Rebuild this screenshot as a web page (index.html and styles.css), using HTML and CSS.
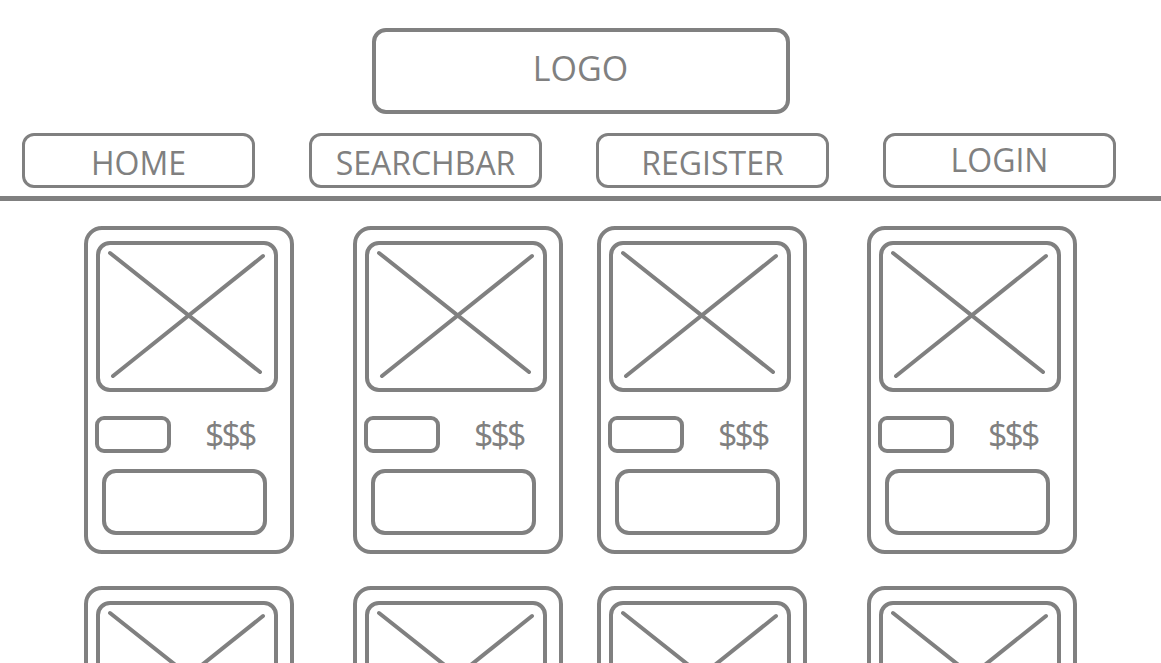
FILE: index.html
```html
<!DOCTYPE html>
<html lang="en">
<head>
<meta charset="utf-8"/>
<meta content="width=device-width, initial-scale=1.0" name="viewport"/>
<title>Shop Wireframe</title>
<link rel="stylesheet" href="styles.css">
</head>
<body>
<header class="top">
  <div class="logo">LOGO</div>
  <nav class="nav">
    <a class="nav-btn home">HOME</a>
    <a class="nav-btn search">SEARCHBAR</a>
    <a class="nav-btn register">REGISTER</a>
    <a class="nav-btn login">LOGIN</a>
  </nav>
</header>
<div class="divider"></div>

<main class="grid">
  <!-- row 1 -->
  <div class="card">
    <div class="pic"><svg viewBox="0 0 174 143"><line x1="10" y1="8" x2="160" y2="127"/><line x1="163" y1="11" x2="13" y2="131"/></svg></div>
    <div class="meta"><div class="tag"></div><span class="price">$$$</span></div>
    <div class="action"></div>
  </div>
  <div class="card">
    <div class="pic"><svg viewBox="0 0 174 143"><line x1="10" y1="8" x2="160" y2="127"/><line x1="163" y1="11" x2="13" y2="131"/></svg></div>
    <div class="meta"><div class="tag"></div><span class="price">$$$</span></div>
    <div class="action"></div>
  </div>
  <div class="card">
    <div class="pic"><svg viewBox="0 0 174 143"><line x1="10" y1="8" x2="160" y2="127"/><line x1="163" y1="11" x2="13" y2="131"/></svg></div>
    <div class="meta"><div class="tag"></div><span class="price">$$$</span></div>
    <div class="action"></div>
  </div>
  <div class="card">
    <div class="pic"><svg viewBox="0 0 174 143"><line x1="10" y1="8" x2="160" y2="127"/><line x1="163" y1="11" x2="13" y2="131"/></svg></div>
    <div class="meta"><div class="tag"></div><span class="price">$$$</span></div>
    <div class="action"></div>
  </div>
  <!-- row 2, cut off by the window -->
  <div class="card">
    <div class="pic"><svg viewBox="0 0 174 143"><line x1="10" y1="8" x2="160" y2="127"/><line x1="163" y1="11" x2="13" y2="131"/></svg></div>
  </div>
  <div class="card">
    <div class="pic"><svg viewBox="0 0 174 143"><line x1="10" y1="8" x2="160" y2="127"/><line x1="163" y1="11" x2="13" y2="131"/></svg></div>
  </div>
  <div class="card">
    <div class="pic"><svg viewBox="0 0 174 143"><line x1="10" y1="8" x2="160" y2="127"/><line x1="163" y1="11" x2="13" y2="131"/></svg></div>
  </div>
  <div class="card">
    <div class="pic"><svg viewBox="0 0 174 143"><line x1="10" y1="8" x2="160" y2="127"/><line x1="163" y1="11" x2="13" y2="131"/></svg></div>
  </div>
</main>
</body>
</html>
```

FILE: styles.css
```css
* {
  box-sizing: border-box;
}

body {
  margin: 0;
  background: #fff;
  color: #808080;
  font-family: "Open Sans", "Noto Sans", sans-serif;
  overflow: hidden;
}

.top {
  padding-top: 28px;
}

.logo {
  width: 418px;
  height: 86px;
  margin: 0 auto;
  border: 4px solid #808080;
  border-radius: 14px;
  display: flex;
  align-items: center;
  justify-content: center;
  font-size: 34px;
  padding-bottom: 6px;
}

.nav {
  display: flex;
  gap: 54px;
  padding-left: 22px;
  margin-top: 19px;
}

.nav-btn {
  width: 233px;
  height: 55px;
  border: 3px solid #808080;
  border-radius: 12px;
  display: flex;
  align-items: center;
  justify-content: center;
  font-size: 32px;
  padding-top: 3px;
}

.nav-btn.login {
  padding-top: 0;
  padding-bottom: 2px;
}

.divider {
  height: 5px;
  background: #808080;
  margin-top: 8px;
}

.grid {
  display: flex;
  flex-wrap: wrap;
  padding-left: 84px;
  row-gap: 32px;
  margin-top: 25px;
  width: 1161px;
}

.card {
  width: 210px;
  height: 328px;
  border: 4px solid #808080;
  border-radius: 18px;
  padding-top: 11px;
}

.card:nth-child(4n+2) { margin-left: 59px; }
.card:nth-child(4n+3) { margin-left: 34px; }
.card:nth-child(4n)   { margin-left: 60px; margin-right: 80px; }

.pic {
  width: 182px;
  height: 151px;
  margin-left: 8px;
  border: 4px solid #808080;
  border-radius: 14px;
}

.pic svg {
  display: block;
  width: 100%;
  height: 100%;
}

.pic line {
  stroke: #808080;
  stroke-width: 4;
  stroke-linecap: round;
}

.meta {
  display: flex;
  align-items: center;
  margin-top: 24px;
  margin-left: 7px;
}

.tag {
  width: 76px;
  height: 37px;
  border: 4px solid #808080;
  border-radius: 9px;
}

.price {
  margin-left: 34px;
  font-size: 34px;
  letter-spacing: -3px;
  line-height: 37px;
}

.action {
  width: 165px;
  height: 66px;
  margin-top: 16px;
  margin-left: 14px;
  border: 4px solid #808080;
  border-radius: 14px;
}
```
